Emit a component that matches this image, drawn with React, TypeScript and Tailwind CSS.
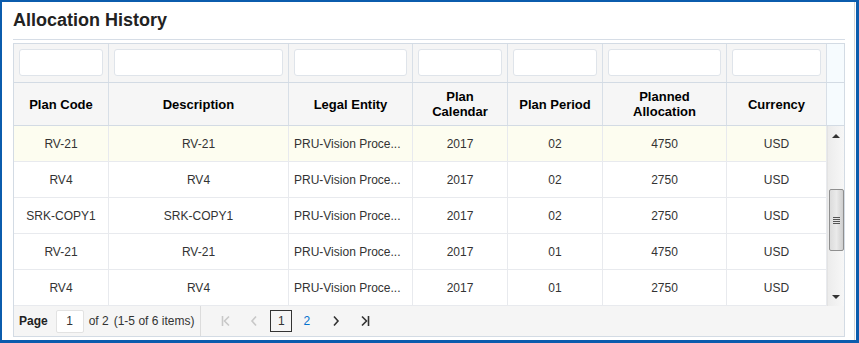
import React from "react";

type Row = {
  code: string;
  desc: string;
  entity: string;
  year: string;
  period: string;
  amount: string;
  currency: string;
};

const rows: Row[] = [
  { code: "RV-21", desc: "RV-21", entity: "PRU-Vision Proce...", year: "2017", period: "02", amount: "4750", currency: "USD" },
  { code: "RV4", desc: "RV4", entity: "PRU-Vision Proce...", year: "2017", period: "02", amount: "2750", currency: "USD" },
  { code: "SRK-COPY1", desc: "SRK-COPY1", entity: "PRU-Vision Proce...", year: "2017", period: "02", amount: "2750", currency: "USD" },
  { code: "RV-21", desc: "RV-21", entity: "PRU-Vision Proce...", year: "2017", period: "01", amount: "4750", currency: "USD" },
  { code: "RV4", desc: "RV4", entity: "PRU-Vision Proce...", year: "2017", period: "01", amount: "2750", currency: "USD" },
];

const widths = ["w-[95px]", "w-[180px]", "w-[124px]", "w-[95px]", "w-[95px]", "w-[124px]", "w-[100px]"];

const headers: React.ReactNode[] = [
  "Plan Code",
  "Description",
  "Legal Entity",
  <>Plan<br />Calendar</>,
  "Plan Period",
  <>Planned<br />Allocation</>,
  "Currency",
];

const Chevron = ({ dir, color }: { dir: "left" | "right"; color: string }) => (
  <svg width="8" height="12" viewBox="0 0 8 12">
    <path
      d={dir === "left" ? "M6 1.5 L2 6 L6 10.5" : "M2 1.5 L6 6 L2 10.5"}
      fill="none"
      stroke={color}
      strokeWidth="1.6"
    />
  </svg>
);

const EdgeIcon = ({ dir, color }: { dir: "first" | "last"; color: string }) => (
  <svg width="10" height="12" viewBox="0 0 10 12">
    {dir === "first" ? (
      <>
        <path d="M1.5 1 V11" stroke={color} strokeWidth="1.6" />
        <path d="M8 1.5 L3.5 6 L8 10.5" fill="none" stroke={color} strokeWidth="1.6" />
      </>
    ) : (
      <>
        <path d="M2 1.5 L6.5 6 L2 10.5" fill="none" stroke={color} strokeWidth="1.6" />
        <path d="M8.5 1 V11" stroke={color} strokeWidth="1.6" />
      </>
    )}
  </svg>
);

const Scrollbar = () => (
  <div className="w-[17px] h-[180px] bg-gradient-to-r from-[#ececec] to-[#f7f7f7] border-l border-[#e3e3e3] flex flex-col items-center">
    <div className="h-[20px] flex items-center justify-center">
      <div className="w-0 h-0 border-l-[4px] border-r-[4px] border-b-[4px] border-l-transparent border-r-transparent border-b-[#333]" />
    </div>
    <div className="mt-[43px] w-[15px] h-[62px] rounded-[2px] border border-[#8f8f8f] bg-gradient-to-r from-[#dcdcdc] via-[#eaeaea] to-[#cfcfcf] flex flex-col items-center justify-center gap-[1px]">
      <div className="w-[7px] h-[1px] bg-[#555]" />
      <div className="w-[7px] h-[1px] bg-[#555]" />
      <div className="w-[7px] h-[1px] bg-[#555]" />
      <div className="w-[7px] h-[1px] bg-[#555]" />
    </div>
    <div className="flex-1" />
    <div className="h-[18px] flex items-center justify-center">
      <div className="w-0 h-0 border-l-[4px] border-r-[4px] border-t-[4px] border-l-transparent border-r-transparent border-t-[#333]" />
    </div>
  </div>
);

const App: React.FC = () => {
  return (
    <div
      className="w-[859px] h-[343px] bg-white border-t-2 border-l-2 border-r-[3px] border-b-[3px] border-[#0b5cad] overflow-hidden"
      style={{ fontFamily: '"Liberation Sans", Arial, sans-serif' }}
    >
      <div className="h-full border-r border-[#d6d6d6] mr-[1px] pl-[11px] pt-[7px]">
        <h2 className="text-[18px] font-bold leading-[22px] text-[#222] pb-[8px] border-b border-[#d6dde6] w-[832px]">
          Allocation History
        </h2>
        <div className="mt-[3px] w-[832px] border border-[#d3dbe4]">
          {/* filter row */}
          <div className="flex h-[39px] bg-[#f5f5f5] border-b border-[#d3dbe4]">
            {widths.map((w, i) => (
              <div key={i} className={`${w} border-r border-[#d8dfe7] px-[5px] pt-[5px]`}>
                <div className="h-[27px] w-full bg-white border border-[#dfe4ea] rounded-[3px]" />
              </div>
            ))}
            <div className="flex-1 bg-[#f6fbfe]" />
          </div>
          {/* header row */}
          <div className="flex h-[43px] bg-[#f6f6f6] border-b border-[#d3dbe4]">
            {widths.map((w, i) => (
              <div
                key={i}
                className={`${w} border-r border-[#d8dfe7] flex items-center justify-center text-center text-[13px] font-bold leading-[15px] text-black`}
              >
                <span>{headers[i]}</span>
              </div>
            ))}
            <div className="flex-1 bg-[#f6fbfe]" />
          </div>
          {/* body */}
          <div className="flex">
            <div>
              {rows.map((r, ri) => (
                <div
                  key={ri}
                  className={`flex h-[36px] border-b border-[#e8eaee] text-[12px] text-[#333] ${ri === 0 ? "bg-[#fdfdf0]" : "bg-white"}`}
                >
                  {[r.code, r.desc, r.entity, r.year, r.period, r.amount, r.currency].map((v, ci) => (
                    <div
                      key={ci}
                      className={`${widths[ci]} border-r border-[#e8eaee] flex items-center ${ci === 2 ? "justify-start pl-[5px]" : "justify-center"} whitespace-nowrap`}
                    >
                      {v}
                    </div>
                  ))}
                </div>
              ))}
            </div>
            <Scrollbar />
          </div>
          {/* pager */}
          <div className="flex items-center h-[30px] bg-[#f5f5f5] text-[12px] text-[#333]">
            <span className="pl-[5px] font-bold text-[#222]">Page</span>
            <div className="ml-[8px] w-[28px] h-[23px] bg-white border border-[#e2e2e2] rounded-[2px] flex items-center justify-center">
              1
            </div>
            <span className="ml-[5px]">of 2</span>
            <span className="ml-[5px]">(1-5 of 6 items)</span>
            <div className="ml-[6px] h-full w-px bg-[#dcdcdc]" />
            <div className="ml-[20px] flex items-center">
              <EdgeIcon dir="first" color="#c8c8c8" />
            </div>
            <div className="ml-[19px] flex items-center">
              <Chevron dir="left" color="#c8c8c8" />
            </div>
            <div className="ml-[12px] w-[22px] h-[22px] border border-[#333] flex items-center justify-center text-[#333]">
              1
            </div>
            <span className="ml-[11px] text-[#0572ce]">2</span>
            <div className="ml-[22px] flex items-center">
              <Chevron dir="right" color="#333" />
            </div>
            <div className="ml-[20px] flex items-center">
              <EdgeIcon dir="last" color="#333" />
            </div>
          </div>
        </div>
      </div>
    </div>
  );
};

export default App;
